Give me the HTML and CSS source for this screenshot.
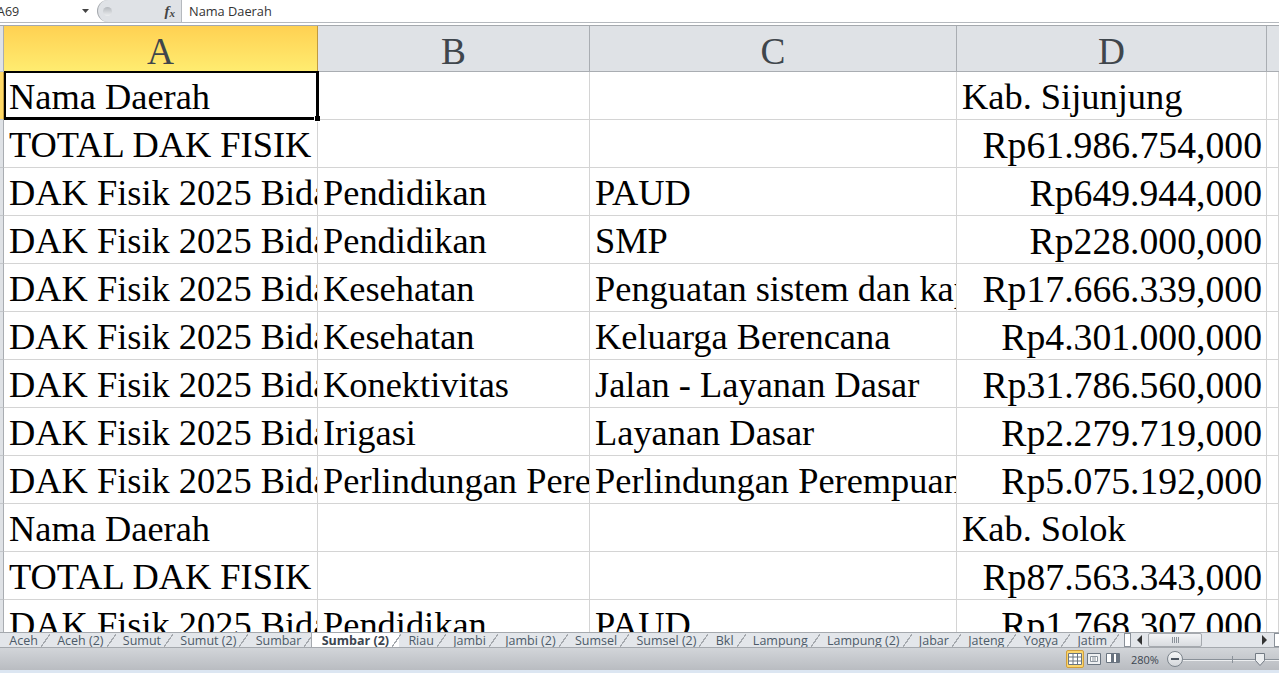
FILE: index.html
```html
<!DOCTYPE html>
<html lang="en">
<head>
  <meta charset="UTF-8" />
  <title>Sumbar (2) - Excel</title>
  <link rel="stylesheet" href="styles.css">
</head>
<body>
  <div class="formula-bar">
    <div class="name-box">
      <span class="name-text">A69</span>
      <svg class="name-arrow" width="8" height="5" viewBox="0 0 8 5"><path d="M0 0h7L3.500 4z" fill="#444"/></svg>
    </div>
    <div class="fx-box">
      <span class="fx-knob"></span>
      <span class="fx-label">f<sub>x</sub></span>
    </div>
    <div class="formula-input">Nama Daerah</div>
  </div>

  <div class="sheet">
    <div class="row head">
      <div class="rh"></div>
      <div class="ch active">A</div>
      <div class="ch">B</div>
      <div class="ch">C</div>
      <div class="ch">D</div>
      <div class="ch end"></div>
    </div>
    <div class="row">
      <div class="rh active"></div>
      <div class="cell selected">Nama Daerah</div><div class="cell"></div><div class="cell"></div><div class="cell">Kab. Sijunjung</div><div class="cell"></div>
    </div>
    <div class="row">
      <div class="rh"></div>
      <div class="cell">TOTAL DAK FISIK</div><div class="cell"></div><div class="cell"></div><div class="cell num">Rp61.986.754,000</div><div class="cell"></div>
    </div>
    <div class="row">
      <div class="rh"></div>
      <div class="cell">DAK Fisik 2025 Bidang</div><div class="cell">Pendidikan</div><div class="cell">PAUD</div><div class="cell num">Rp649.944,000</div><div class="cell"></div>
    </div>
    <div class="row">
      <div class="rh"></div>
      <div class="cell">DAK Fisik 2025 Bidang</div><div class="cell">Pendidikan</div><div class="cell">SMP</div><div class="cell num">Rp228.000,000</div><div class="cell"></div>
    </div>
    <div class="row">
      <div class="rh"></div>
      <div class="cell">DAK Fisik 2025 Bidang</div><div class="cell">Kesehatan</div><div class="cell">Penguatan sistem dan kapasitas</div><div class="cell num">Rp17.666.339,000</div><div class="cell"></div>
    </div>
    <div class="row">
      <div class="rh"></div>
      <div class="cell">DAK Fisik 2025 Bidang</div><div class="cell">Kesehatan</div><div class="cell">Keluarga Berencana</div><div class="cell num">Rp4.301.000,000</div><div class="cell"></div>
    </div>
    <div class="row">
      <div class="rh"></div>
      <div class="cell">DAK Fisik 2025 Bidang</div><div class="cell">Konektivitas</div><div class="cell">Jalan - Layanan Dasar</div><div class="cell num">Rp31.786.560,000</div><div class="cell"></div>
    </div>
    <div class="row">
      <div class="rh"></div>
      <div class="cell">DAK Fisik 2025 Bidang</div><div class="cell">Irigasi</div><div class="cell">Layanan Dasar</div><div class="cell num">Rp2.279.719,000</div><div class="cell"></div>
    </div>
    <div class="row">
      <div class="rh"></div>
      <div class="cell">DAK Fisik 2025 Bidang</div><div class="cell">Perlindungan Perempuan</div><div class="cell">Perlindungan Perempuan</div><div class="cell num">Rp5.075.192,000</div><div class="cell"></div>
    </div>
    <div class="row">
      <div class="rh"></div>
      <div class="cell">Nama Daerah</div><div class="cell"></div><div class="cell"></div><div class="cell">Kab. Solok</div><div class="cell"></div>
    </div>
    <div class="row">
      <div class="rh"></div>
      <div class="cell">TOTAL DAK FISIK</div><div class="cell"></div><div class="cell"></div><div class="cell num">Rp87.563.343,000</div><div class="cell"></div>
    </div>
    <div class="row">
      <div class="rh"></div>
      <div class="cell">DAK Fisik 2025 Bidang</div><div class="cell">Pendidikan</div><div class="cell">PAUD</div><div class="cell num">Rp1.768.307,000</div><div class="cell"></div>
    </div>
  </div>

  <div class="tab-bar">
    <div class="tabs">
      <div class="tab">Aceh</div>
      <div class="tab">Aceh (2)</div>
      <div class="tab">Sumut</div>
      <div class="tab">Sumut (2)</div>
      <div class="tab">Sumbar</div>
      <div class="tab current">Sumbar (2)</div>
      <div class="tab">Riau</div>
      <div class="tab">Jambi</div>
      <div class="tab">Jambi (2)</div>
      <div class="tab">Sumsel</div>
      <div class="tab">Sumsel (2)</div>
      <div class="tab">Bkl</div>
      <div class="tab">Lampung</div>
      <div class="tab">Lampung (2)</div>
      <div class="tab">Jabar</div>
      <div class="tab">Jateng</div>
      <div class="tab">Yogya</div>
      <div class="tab">Jatim</div>
    </div>
    <div class="hscroll">
      <span class="splitter"></span>
      <svg class="scroll-arrow" width="6" height="10" viewBox="0 0 6 10"><path d="M5 0v10L0 5z" fill="#333"/></svg>
      <div class="track">
        <div class="thumb"><span class="grip"></span></div>
      </div>
      <svg class="scroll-arrow" width="6" height="10" viewBox="0 0 6 10"><path d="M0 0v10l5-5z" fill="#333"/></svg>
      <span class="splitter last"></span>
    </div>
  </div>

  <div class="status-bar">
    <div class="view-btn on">
      <svg width="14" height="12" viewBox="0 0 14 12"><path d="M.5.500h13v11H.5zM.5 4h13M.5 8h13M5 .5v11M9.500 .5v11" fill="#fff" stroke="#6a7480"/></svg>
    </div>
    <div class="view-btn">
      <svg width="14" height="12" viewBox="0 0 14 12"><path d="M.5.500h13v11H.5z" fill="#eef0f2" stroke="#6a7480"/><path d="M3.500 3.500h7v5h-7zM5 5h4M5 7h4" fill="#fff" stroke="#8a939c"/></svg>
    </div>
    <div class="view-btn">
      <svg width="14" height="12" viewBox="0 0 14 12"><path d="M.5.500h13v9H.5z" fill="#fff" stroke="#6a7480"/><path d="M5 1h3v8H5zM10 1h3v8h-3z" fill="#6a7480"/></svg>
    </div>
    <span class="zoom-level">280%</span>
    <span class="zoom-minus"></span>
    <div class="zoom-slider">
      <span class="zoom-tick"></span>
      <svg class="zoom-handle" width="10" height="13" viewBox="0 0 10 13"><path d="M.5.500h9v7L5 12.500.5 7.500z" fill="#eceef0" stroke="#737b84"/></svg>
    </div>
  </div>
</body>
</html>
```

FILE: styles.css
```css
html, body {
  height: 100%;
}
body {
  margin: 0;
  display: flex;
  flex-direction: column;
  overflow: hidden;
  background: #dce6f2;
  font-family: "Open Sans", sans-serif;
}

/* formula bar */
.formula-bar {
  display: flex;
  flex: none;
  height: 22px;
  background: #fff;
  border-bottom: 1px solid #b5b9be;
}
.name-box {
  display: flex;
  align-items: center;
  justify-content: space-between;
  width: 92px;
  padding-right: 2px;
  box-sizing: border-box;
  font-size: 12.500px;
  color: #333;
  overflow: hidden;
}
.name-text {
  margin-left: -3px;
}
.fx-box {
  display: flex;
  align-items: center;
  justify-content: flex-end;
  width: 85px;
  margin-left: 5px;
  padding-right: 6px;
  box-sizing: border-box;
  background: #dfe2e6;
  border-left: 1px solid #a5a9ae;
  border-right: 1px solid #b5b9be;
  border-radius: 11px 0 0 11px;
}
.fx-knob {
  width: 9px;
  height: 9px;
  margin-right: auto;
  margin-left: 5px;
  background: linear-gradient(#b4b8bd, #eceef0);
  border-radius: 50%;
}
.fx-label {
  font-family: "Liberation Serif", serif;
  font-style: italic;
  font-weight: bold;
  font-size: 15px;
  line-height: 18px;
  color: #444;
}
.fx-label sub {
  font-size: 11px;
  line-height: 0;
  vertical-align: -1px;
}
.formula-input {
  flex: 1;
  padding-left: 7px;
  font-size: 12.800px;
  line-height: 22px;
  color: #333;
}

/* grid */
.sheet {
  flex: 1;
  min-height: 0;
  overflow: hidden;
  background: #fff;
  border-top: 2px solid #fff;
  font-family: "Liberation Serif", serif;
}
.row {
  display: grid;
  grid-template-columns: 4px 314px 272px 367px 310px 1fr;
  grid-auto-rows: 48px;
  height: 48px;
}
.row.head {
  grid-auto-rows: 46px;
  height: 47px;
  box-sizing: border-box;
  border-top: 1px solid #a5a9ae;
}
.rh {
  background: #dfe2e6;
  border-right: 1px solid #a9adb2;
  border-bottom: 1px solid #c4c7cb;
  box-sizing: border-box;
}
.rh.active {
  background: #ffd966;
  border-right-color: #c09a40;
}
.ch {
  background: #dfe2e6;
  border-right: 1px solid #a9adb2;
  border-bottom: 1px solid #a9adb2;
  box-sizing: border-box;
  text-align: center;
  font-size: 37.330px;
  line-height: 51px;
  color: #3f464c;
  overflow: hidden;
}
.ch.active {
  background: linear-gradient(#ffd152, #ffec70);
  border-right-color: #c09a40;
  border-bottom-color: #c09a40;
}
.ch.end {
  border-right: 0;
}
.cell {
  position: relative;
  box-sizing: border-box;
  min-width: 0;
  padding: 0 4px 0 5px;
  border-right: 1px solid #d4d4d4;
  border-bottom: 1px solid #d4d4d4;
  font-size: 36.400px;
  line-height: 50px;
  color: #000;
  white-space: nowrap;
  overflow: hidden;
}
.cell.num {
  font-size: 37.700px;
  text-align: right;
}
.cell.selected {
  z-index: 1;
  overflow: visible;
}
.cell.selected::after {
  content: "";
  position: absolute;
  top: -1px;
  left: 0;
  right: -2px;
  bottom: -1px;
  border: 2px solid #000;
  border-right-width: 3px;
  border-bottom-width: 3px;
}
.cell.selected::before {
  content: "";
  position: absolute;
  right: -3px;
  bottom: -3px;
  z-index: 1;
  width: 5px;
  height: 5px;
  background: #000;
  border: 1px solid #fff;
  border-right: 0;
  border-top: 0;
}

/* sheet tabs */
.tab-bar {
  display: flex;
  flex: none;
  height: 16px;
  background: #e3e6ea;
  border-top: 1px solid #a5a9ae;
  border-bottom: 1px solid #a5a9ae;
  box-sizing: border-box;
  overflow: hidden;
}
.tabs {
  display: flex;
  flex: none;
  width: 1124px;
  overflow: hidden;
}
.tab {
  position: relative;
  flex: none;
  padding: 0 10px 0 9.300px;
  font-size: 12.500px;
  line-height: 16px;
  color: #4c5a68;
}
.tab::after {
  content: "";
  position: absolute;
  right: -2px;
  top: 1px;
  width: 9px;
  height: 13px;
  background: linear-gradient(to top left, transparent 46%, #a5a9ae 46%, #a5a9ae 54%, transparent 54%);
}
.tab.current {
  background: #fff;
  font-weight: bold;
  color: #3c4650;
  border-left: 1px solid #a5a9ae;
}
.hscroll {
  display: flex;
  flex: 1;
  align-items: center;
  margin-right: -2px;
}
.splitter {
  flex: none;
  box-sizing: border-box;
  width: 7px;
  height: 14px;
  margin-right: 6px;
  background: #fff;
  border: 1px solid #8a9199;
}
.splitter.last {
  margin: 0 0 0 6px;
}
.scroll-arrow {
  flex: none;
}
.track {
  flex: 1;
  margin: 0 5px;
}
.thumb {
  display: flex;
  align-items: center;
  justify-content: center;
  width: 54px;
  height: 14px;
  box-sizing: border-box;
  background: linear-gradient(#f3f4f6, #d9dce0);
  border: 1px solid #a5a9ae;
  border-radius: 2px;
}
.grip {
  width: 7px;
  height: 6px;
  background: repeating-linear-gradient(to right, #8a9199 0 1px, transparent 1px 2px);
}

/* status bar */
.status-bar {
  display: flex;
  flex: none;
  align-items: center;
  height: 22px;
  margin-bottom: 3px;
  padding-left: 1066px;
  box-sizing: border-box;
  background: linear-gradient(#d2d5d9, #b9bcc1);
}
.view-btn {
  display: flex;
  align-items: center;
  justify-content: center;
  flex: none;
  width: 18px;
  height: 18px;
  margin-right: 1px;
  box-sizing: border-box;
}
.view-btn.on {
  background: #fbd56b;
  border: 1px solid #d19f3c;
  border-radius: 2px;
}
.zoom-level {
  flex: none;
  margin: 0 8px 0 8px;
  font-size: 11px;
  color: #3c4650;
}
.zoom-minus {
  position: relative;
  flex: none;
  width: 16px;
  height: 16px;
  box-sizing: border-box;
  background: linear-gradient(#f5f6f7, #d4d7db);
  border: 1px solid #7c848c;
  border-radius: 50%;
}
.zoom-minus::after {
  content: "";
  position: absolute;
  left: 3px;
  top: 6px;
  width: 8px;
  height: 2px;
  background: #4c5560;
}
.zoom-slider {
  position: relative;
  flex: 1;
  height: 1px;
  background: #8a9199;
  box-shadow: 0 1px 0 #eceef0;
}
.zoom-tick {
  position: absolute;
  left: 49px;
  top: -3px;
  width: 1px;
  height: 7px;
  background: #8a9199;
}
.zoom-handle {
  position: absolute;
  left: 72px;
  top: -6px;
}
```
